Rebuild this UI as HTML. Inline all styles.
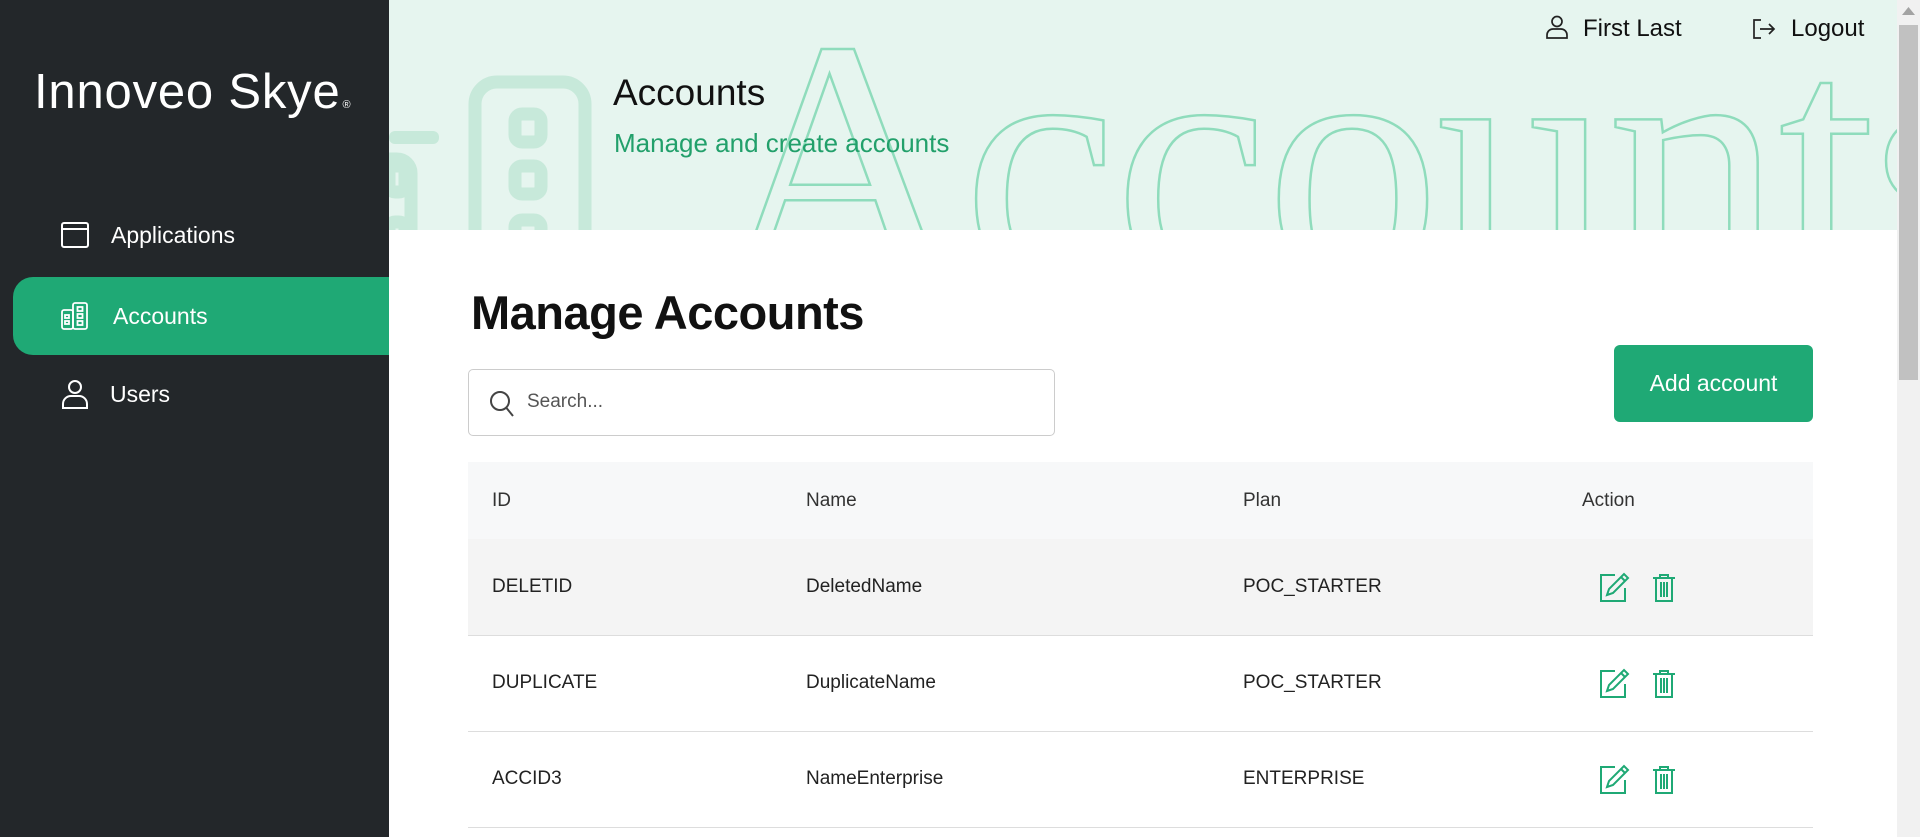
<!DOCTYPE html>
<html><head><meta charset="utf-8"><style>
*{box-sizing:border-box;margin:0;padding:0}
body{width:1920px;height:837px;overflow:hidden;font-family:"Liberation Sans",sans-serif;background:#fff;position:relative}
.side{position:absolute;left:0;top:0;width:389px;height:837px;background:#23272a;color:#fff}
.logo{position:absolute;left:34px;top:64px;font-size:49px;letter-spacing:0.8px;font-weight:400}
.logo sup{font-size:11px;vertical-align:0;margin-left:2px}
.nav{position:absolute;left:13px;width:376px;height:78px;display:flex;align-items:center;font-size:23px}
.nav svg{position:absolute;left:48px}
.nav span{position:absolute;left:98px}
.nav.act{background:#1fa975;border-radius:20px 0 0 20px}
.head{position:absolute;left:389px;top:0;width:1514px;height:230px;background:#e6f5ef;overflow:hidden}
.main{position:absolute;left:389px;top:230px;width:1514px;height:607px}
.sb{position:absolute;left:1897px;top:0;width:23px;height:837px;background:#f1f1f1}
.sb .th{position:absolute;left:2px;top:25px;width:19px;height:355px;background:#c1c1c1}
.t{position:absolute;white-space:nowrap}
table{position:absolute;left:79px;top:232px;width:1345px;border-collapse:collapse;font-size:19px;color:#222}
th{height:77px;background:#f7f8f9;text-align:left;font-weight:400;color:#333}
td{height:96px;border-bottom:1px solid #ddd}
th,td{padding-left:24px}
tr.h td{background:#f4f4f4}
</style></head><body>
<div class="side">
 <div class="logo">Innoveo Skye<sup>®</sup></div>
 <div class="nav" style="top:196px">
  <svg width="28" height="26" viewBox="0 0 28 26" fill="none" stroke="#fff" stroke-width="2"><rect x="1" y="1" width="26" height="24" rx="2"/><line x1="1" y1="7" x2="27" y2="7"/></svg><span>Applications</span></div>
 <div class="nav act" style="top:277px">
  <svg width="28" height="28" viewBox="0 0 28 28" fill="none" stroke="#fff" stroke-width="1.8"><rect x="12" y="1" width="14" height="26" rx="2"/><rect x="1" y="8" width="11" height="19" rx="2"/><rect x="16.5" y="5" width="5" height="4"/><rect x="16.5" y="12" width="5" height="4"/><rect x="16.5" y="19" width="5" height="4"/><rect x="4" y="13" width="4" height="3"/><rect x="4" y="19" width="4" height="3"/></svg><span style="left:100px">Accounts</span></div>
 <div class="nav" style="top:355px">
  <svg width="28" height="30" viewBox="0 0 28 30" fill="none" stroke="#fff" stroke-width="2"><circle cx="14" cy="8" r="6"/><path d="M2 29v-4a8 8 0 0 1 8-8h8a8 8 0 0 1 8 8v4z"/></svg><span style="left:97px">Users</span></div>
</div>
<div class="head">
 <svg width="1514" height="230" style="position:absolute;left:0;top:0">
  <g fill="none" stroke="#c7e9da" stroke-width="13">
   <rect x="86" y="82" width="110" height="200" rx="22"/>
   <rect x="-40" y="159" width="62" height="140" rx="14"/>
   <rect x="126" y="114" width="26" height="28" rx="7"/>
   <rect x="126" y="166" width="26" height="28" rx="7"/>
   <rect x="126" y="220" width="26" height="28" rx="7"/>
   <rect x="0" y="166" width="16" height="26" rx="6"/>
   <rect x="0" y="222" width="16" height="26" rx="6"/>
  </g>
  <rect x="0" y="131" width="50" height="13" rx="6" fill="#c7e9da"/>
  <text x="325" y="280" font-family="Liberation Serif,serif" font-size="350" fill="none" stroke="#8fdcbc" stroke-width="2.5" letter-spacing="-4">Accounts</text>
 </svg>
 <div class="t" style="left:224px;top:72px;font-size:37px;color:#111">Accounts</div>
 <div class="t" style="left:225px;top:128px;font-size:26px;color:#22a06b">Manage and create accounts</div>
 <svg class="t" style="left:1157px;top:15px" width="22" height="24" viewBox="0 0 22 24" fill="none" stroke="#222" stroke-width="1.7"><circle cx="11" cy="6.5" r="5"/><path d="M1 23v-3a6 6 0 0 1 6-6h8a6 6 0 0 1 6 6v3z"/></svg>
 <div class="t" style="left:1194px;top:15px;font-size:24px;color:#111">First Last</div>
 <svg class="t" style="left:1363px;top:18px" width="24" height="22" viewBox="0 0 24 22" fill="none" stroke="#222" stroke-width="1.7"><path d="M9 2H2v18h7M8 11h14M17 6l5 5-5 5"/></svg>
 <div class="t" style="left:1402px;top:15px;font-size:24px;color:#111">Logout</div>
</div>
<div class="main">
 <div class="t" style="left:82px;top:55px;font-size:47px;font-weight:700;color:#111;letter-spacing:-0.5px">Manage Accounts</div>
 <div class="t" style="left:79px;top:139px;width:587px;height:67px;border:1px solid #ccc;border-radius:5px">
  <svg style="position:absolute;left:20px;top:20px" width="26" height="28" viewBox="0 0 26 28" fill="none" stroke="#444" stroke-width="2"><circle cx="11" cy="11" r="9"/><line x1="17.5" y1="18" x2="24" y2="26"/></svg>
  <div style="position:absolute;left:58px;top:21px;font-size:19px;color:#555">Search...</div>
 </div>
 <div class="t" style="left:1225px;top:115px;width:199px;height:77px;background:#1fa975;border-radius:6px;color:#fff;font-size:23px;display:flex;align-items:center;justify-content:center">Add account</div>
 <table>
  <tr><th style="width:314px">ID</th><th style="width:437px">Name</th><th style="width:339px">Plan</th><th>Action</th></tr>
  <tr class="h"><td>DELETID</td><td>DeletedName</td><td>POC_STARTER</td><td>ICONS</td></tr>
  <tr><td>DUPLICATE</td><td>DuplicateName</td><td>POC_STARTER</td><td>ICONS</td></tr>
  <tr><td>ACCID3</td><td>NameEnterprise</td><td>ENTERPRISE</td><td>ICONS</td></tr>
 </table>
</div>
<div class="sb"><div class="th"></div><svg style="position:absolute;left:5px;top:7px" width="13" height="8"><path d="M0 8L6.5 0L13 8z" fill="#a3a3a3"/></svg></div>
<script>
var ic='<svg width="34" height="30" viewBox="0 0 34 30" fill="none" stroke="#1fa975" stroke-width="2" style="margin-left:17px;vertical-align:middle"><path d="M16 3H2v26h24V16"/><path d="M8 23l2-6L25 2l4 4-15 15z"/><path d="M22 5l4 4"/></svg><svg width="26" height="30" viewBox="0 0 26 30" fill="none" stroke="#1fa975" stroke-width="2" style="margin-left:18px;vertical-align:middle"><path d="M2 6h22M9 6V3h8v3M5 6v23h16V6M10 10v15M13 10v15M16 10v15"/></svg>';
document.querySelectorAll('td').forEach(function(t){if(t.textContent=='ICONS')t.innerHTML=ic;});
</script>
</body></html>
